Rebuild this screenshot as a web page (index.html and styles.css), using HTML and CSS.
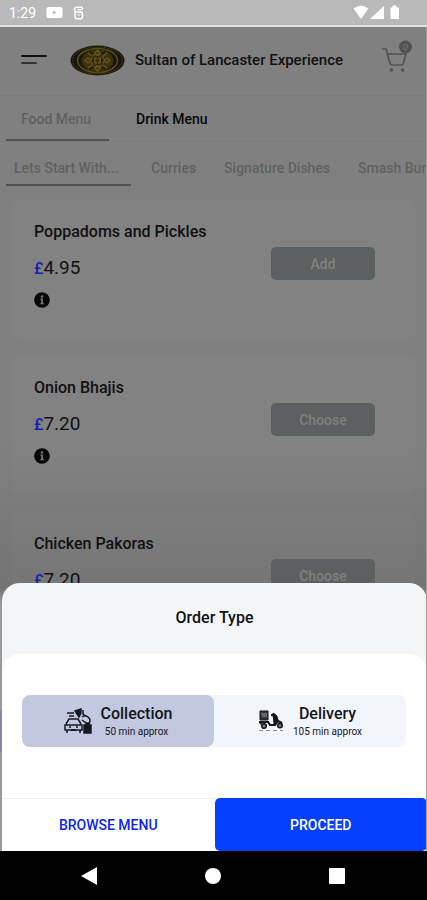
FILE: index.html
```html
<!DOCTYPE html>
<html lang="en">
<head>
<meta charset="utf-8">
<meta name="viewport" content="width=device-width, initial-scale=1">
<title>Sultan of Lancaster Experience</title>
<link rel="stylesheet" href="styles.css">
</head>
<body>
<svg class="defs" aria-hidden="true">
  <symbol id="info" viewBox="0 0 16 16">
    <circle cx="8" cy="8" r="7.800" fill="#080808"/>
    <path d="M6.300 6.500H9V11.200H10V12.300H6.200V11.200H7.200V7.600H6.300Z" fill="#777"/>
    <circle cx="8" cy="4.500" r="1.200" fill="#777"/>
  </symbol>
</svg>
<div class="phone">
  <div class="status">
    <span>1:29</span>
    <svg width="17" height="13" viewBox="0 0 17 13"><rect x="0.500" y="1" width="16" height="11" rx="2" fill="#fff"/><path d="M7 4.500L10.500 6.500L7 8.500Z" fill="#b9b9b9"/></svg>
    <svg width="11" height="14" viewBox="0 0 11 14" fill="none" stroke="#fff" stroke-width="1.500"><path d="M9.500 3V2.500Q9.500 1.200 8 1.200H3.500Q1.500 1.200 1.500 3.600Q1.500 6 3.500 6H7.500Q9.500 6 9.500 8.500V10.500Q9.500 12.800 7.500 12.800H4Q2 12.800 2 10.500V6"/><path d="M4.500 3.600H9.500M4.500 9H7.500" stroke-width="1.200"/></svg>
    <svg class="signals" width="48" height="15" viewBox="0 0 48 15" fill="#fff"><path d="M0.500 3.500Q8 -2 15.500 3.500L8 14Z"/><path d="M31 1V14H17Z"/><path d="M37.500 2.500H39.500V0.500H43.500V2.500H46V14H37.500Z"/></svg>
  </div>
  <div class="screen">
    <header class="bar">
      <button class="icon-btn menu" aria-label="Menu"><svg width="26" height="12" viewBox="0 0 26 12" stroke-linecap="round" stroke-width="2"><path d="M1 2H25" stroke="#111"/><path d="M1 9H15" stroke="#333"/></svg></button>
      <svg class="logo" width="55" height="31" viewBox="0 0 55 31" fill="none">
        <ellipse cx="27.500" cy="15.500" rx="27" ry="15" fill="#17150d"/>
        <ellipse cx="27.500" cy="15.500" rx="25" ry="13.500" stroke="#4a4018" stroke-dasharray="2 1"/>
        <ellipse cx="27.500" cy="15.500" rx="20" ry="12" stroke="#5d4d14" stroke-width="1.500"/>
        <ellipse cx="27.500" cy="15.500" rx="16" ry="11" fill="#3b310f"/>
        <g stroke="#6b571a" stroke-width="1.300"><circle cx="27.500" cy="15.500" r="3"/><circle cx="27.500" cy="15.500" r="6.500" stroke-dasharray="3 2"/><path d="M27.500 5L25 8L27.500 11L30 8ZM27.500 20L25 23L27.500 26L30 23ZM15 15.500L18 13L21 15.500L18 18ZM34 15.500L37 13L40 15.500L37 18ZM18 8L22 11M37 8L33 11M18 23L22 20M37 23L33 20"/></g>
        <path d="M22 15.500H24M31 15.500H33M27.500 11V13M27.500 18V20M20 7L23 9M35 7L32 9M20 24L23 22M35 24L32 22" stroke="#111" stroke-width="1.300"/>
      </svg>
      <h1>Sultan of Lancaster Experience</h1>
      <button class="icon-btn cart" aria-label="Cart"><svg width="32" height="34" viewBox="0 0 32 34" fill="none" stroke="#505252" stroke-width="1.700"><path d="M1 9H5L9 23Q9.500 25 11.500 25H20Q22 25 22.500 23L25 14H7"/><circle cx="10.500" cy="30" r="1.800" fill="#505252" stroke="none"/><circle cx="21.500" cy="30" r="1.800" fill="#505252" stroke="none"/><circle cx="24.500" cy="7" r="6.500" fill="#505252" stroke="none"/><ellipse cx="24.500" cy="7" rx="1.800" ry="2.800" stroke="#6b6d6d" stroke-width="1.200"/></svg></button>
    </header>
    <nav class="tabs">
      <a class="tab on" href="#food">Food Menu</a>
      <a class="tab dark" href="#drink">Drink Menu</a>
    </nav>
    <nav class="tabs sub">
      <a class="tab on" href="#start">Lets Start With...</a>
      <a class="tab" href="#curries">Curries</a>
      <a class="tab" href="#signature">Signature Dishes</a>
      <a class="tab" href="#smash">Smash Burgers</a>
    </nav>
    <main class="list">
      <article class="card">
        <div class="item"><h2>Poppadoms and Pickles</h2><p class="price"><span>£</span>4.95</p><svg class="info" width="16" height="16"><use href="#info"/></svg></div>
        <button class="pick">Add</button>
      </article>
      <article class="card">
        <div class="item"><h2>Onion Bhajis</h2><p class="price"><span>£</span>7.20</p><svg class="info" width="16" height="16"><use href="#info"/></svg></div>
        <button class="pick">Choose</button>
      </article>
      <article class="card">
        <div class="item"><h2>Chicken Pakoras</h2><p class="price"><span>£</span>7.20</p><svg class="info" width="16" height="16"><use href="#info"/></svg></div>
        <button class="pick">Choose</button>
      </article>
    </main>
    <section class="sheet" aria-labelledby="sheet-title">
      <h2 class="sheet-title" id="sheet-title">Order Type</h2>
      <div class="panel">
        <div class="types">
          <button class="type chosen">
            <svg width="28" height="26" viewBox="0 0 28 26" fill="none" stroke="#161920" stroke-width="1.500"><path d="M3 5H10M5 8H10M19 2V6L22 8" /><path d="M11 3L17 1V5L15 9L13 6Z" fill="#161920"/><path d="M2 16L5 11H14L17 16M1 17H18V22H1ZM3 22V25M16 22V25M5 19H7M12 19H14"/><path d="M18 9Q22 6 25 10Q27 12 25 16M18 12L22 15"/><path d="M20 17H27V25H20ZM22 17V15H25V17" fill="#161920"/><path d="M7 22H12" stroke-width="2"/></svg>
            <span class="words"><strong>Collection</strong><small>50 min approx</small></span>
          </button>
          <button class="type">
            <svg width="26" height="22" viewBox="0 0 26 22" fill="none" stroke="#15171c"><path d="M2 1H10V10H2Z" fill="#33363d"/><path d="M3 4H9M4 6H9" stroke="#999"/><path d="M1 12H11M2 14L4 12H10L12 15H17L19 12L15 5H13M16 4L20 11L24 13" stroke-width="2.200"/><path d="M15 3L19 6L20 12L16 14Z" fill="#15171c"/><circle cx="6" cy="16" r="2.300" fill="#777" stroke-width="1.500"/><circle cx="22" cy="15.500" r="2.300" fill="#777" stroke-width="1.500"/><path d="M1 20.500H25" stroke="#888b92" stroke-dasharray="4 3"/></svg>
            <span class="words"><strong>Delivery</strong><small>105 min approx</small></span>
          </button>
        </div>
        <div class="actions">
          <button class="browse">BROWSE MENU</button>
          <button class="proceed">PROCEED</button>
        </div>
      </div>
    </section>
  </div>
  <div class="system">
    <button class="icon-btn" aria-label="Back"><svg width="18" height="18" viewBox="0 0 18 18"><path d="M1 9L17 0V18Z" fill="#fff"/></svg></button>
    <button class="icon-btn" aria-label="Home"><svg width="18" height="18" viewBox="0 0 18 18"><circle cx="9" cy="9" r="8" fill="#fff"/></svg></button>
    <button class="icon-btn" aria-label="Recent apps"><svg width="18" height="18" viewBox="0 0 18 18"><rect x="1" y="1" width="16" height="16" rx="1" fill="#fff"/></svg></button>
  </div>
</div>
</body>
</html>
```
FILE: styles.css
```css
* { box-sizing: border-box; }
body { margin: 0; font-family: Roboto, sans-serif; color: #111; }
h1, h2, p { margin: 0; }
button { font: inherit; border: 0; padding: 0; cursor: pointer; }
a { color: inherit; text-decoration: none; }
svg { display: block; flex: none; }
.defs { position: absolute; width: 0; height: 0; }
.icon-btn { background: none; }

.phone { display: flex; flex-direction: column; height: 100vh; }
.status {
  display: flex; align-items: center; gap: 10px;
  height: 27px; padding: 0 22px 0 9px;
  background: #b9b9b9; border-bottom: 2px solid #e2e2e2;
  color: #fff; font-size: 14px;
}
.signals { margin-left: auto; margin-right: 4px; }

.screen {
  position: relative; flex: 1; min-height: 0; overflow: hidden;
  background: linear-gradient(#808080 50%, #747474 68%, #999 70% 83%, #8486a8 83% 88%, #999 88%);
  border-right: 1px solid #a0a0a0;
}
.bar {
  display: flex; align-items: center;
  height: 69px; padding: 0 13px 2px 21px;
  border-bottom: 1px solid #7b7b7b;
}
.logo { margin: 0 10px 0 23px; }
.bar h1 { font-size: 15px; font-weight: 500; }
.cart { margin: -6px 0 0 auto; }

.tabs {
  display: flex; gap: 12px; height: 46px; padding-left: 6px;
  border-bottom: 1px solid #7b7b7b; overflow: hidden;
  font-size: 14px; font-weight: 500; color: #5e6060; white-space: nowrap;
}
.tab { flex: none; min-width: 103px; padding: 0 15px; line-height: 46px; }
.tab.on { border-bottom: 2px solid #515353; }
.dark { color: #080808; }
.sub { height: 44px; border: 0; }
.sub .tab { min-width: 0; padding: 0 8px; line-height: 52px; }
.sub .on { flex: 0 0 125px; }

.list { display: grid; gap: 16px; padding: 13px 11px 0 12px; }
.card {
  display: flex; justify-content: space-between; align-items: flex-start;
  height: 140px; padding: 23px 40px 0 22px;
  background: rgba(255, 255, 255, 0.02); border-radius: 8px;
}
.card h2 { font-size: 16px; line-height: 20px; font-weight: 500; }
.price { margin-top: 13px; font-size: 19px; line-height: 26px; }
.price span { color: #1620b0; font-size: 16px; font-weight: 500; }
.info { margin-top: 10px; }
.pick {
  width: 104px; height: 33px; margin-top: 25px;
  border-radius: 5px; background: #5d6060; color: #7f8181;
  font-size: 14px; font-weight: 500;
}

.sheet {
  position: absolute; left: 2px; right: -1px; bottom: 0;
  background: #f3f5f7; border-radius: 18px 18px 0 0;
}
.sheet-title { padding-bottom: 1px; font-size: 16px; line-height: 70px; font-weight: 500; text-align: center; }
.panel { background: #fff; border-radius: 18px 18px 0 0; padding-top: 41px; }
.types {
  display: flex; margin: 0 21px 51px 20px;
  background: #f3f5fd; border-radius: 8px;
}
.type {
  flex: 1; display: flex; align-items: center; justify-content: center; gap: 9px;
  height: 52px; background: none; border-radius: 8px; color: #14161c;
}
.chosen { background: #c1c8df; }
.words { display: grid; padding-top: 2px; text-align: center; }
.words strong { font-size: 16px; line-height: 20px; font-weight: 500; }
.words small { font-size: 10px; line-height: 16px; }
.actions { display: flex; height: 53px; }
.actions button { flex: 1; font-size: 14px; font-weight: 500; }
.browse { background: #fff; color: #0b25ee; border-top: 1px solid #edf1f3; }
.actions .proceed { background: #0540ff; color: #fff; border-radius: 5px; }

.system {
  display: flex; align-items: center; justify-content: space-between;
  height: 49px; padding: 0 81px 0 80px; background: #000;
}
```
